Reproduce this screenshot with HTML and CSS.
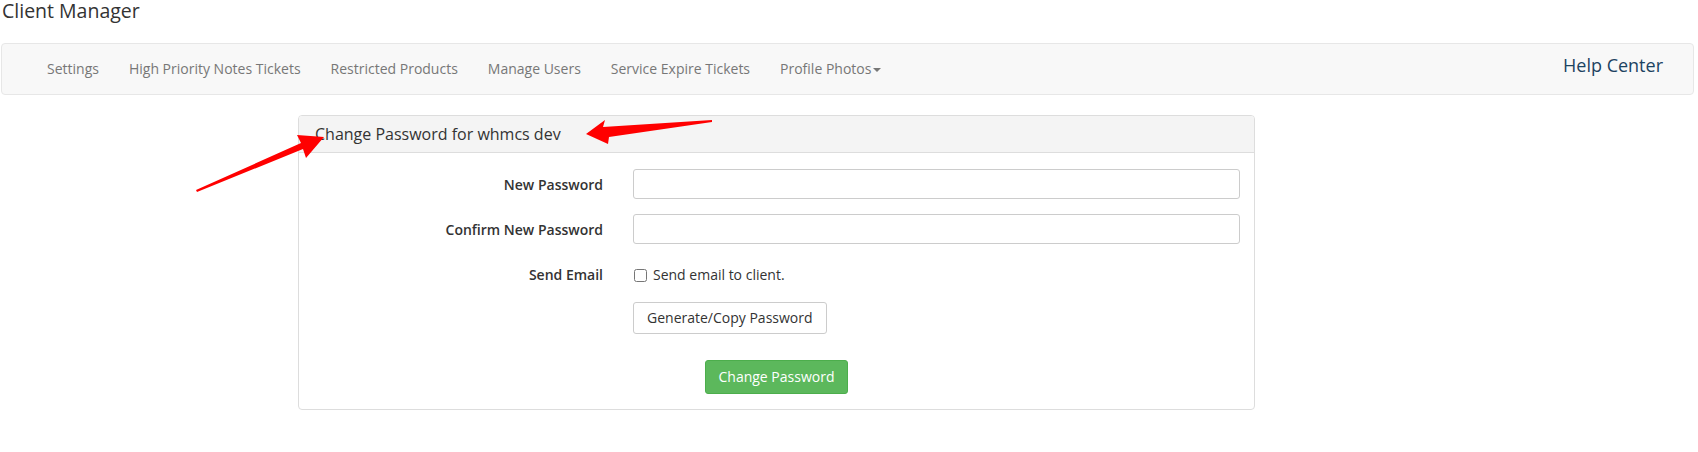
FILE: index.html
```html
<!DOCTYPE html>
<html>
<head>
	<meta charset="utf-8">
	<title>Client Manager</title>
	<link rel="stylesheet" href="styles.css">
</head>
<body>
	<div class="page">
		<h1 class="title">Client Manager</h1>
		<div class="navbar">
			<ul class="nav">
				<li>Settings</li>
				<li>High Priority Notes Tickets</li>
				<li>Restricted Products</li>
				<li>Manage Users</li>
				<li>Service Expire Tickets</li>
				<li>Profile Photos<span class="caret"></span></li>
			</ul>
			<div class="help">Help Center</div>
		</div>

		<div class="panel">
			<div class="panel-heading">Change Password for whmcs dev</div>
			<div class="panel-body">
				<div class="form">
					<label class="label">New Password</label>
					<input class="input" type="password">

					<label class="label">Confirm New Password</label>
					<input class="input" type="password">

					<label class="label row-check">Send Email</label>
					<label class="check row-check"><input type="checkbox">Send email to client.</label>

					<span></span>
					<div><button class="btn">Generate/Copy Password</button></div>
				</div>
				<div class="submit">
					<button class="btn btn-success">Change Password</button>
				</div>
			</div>
		</div>
	</div>

	<svg class="marks" width="1698" height="452" viewBox="0 0 1698 452">
		<path d="M196,190 L301,143 L297,135 L324,137 L306,158 L303,149 L197,192 Z" fill="#ff0000"/>
		<path d="M586,134 L605,120 L603,127 L712,120 L712,122 L609,137 L608,144 Z" fill="#ff0000"/>
	</svg>
</body>
</html>
```

FILE: styles.css
```css
*{
    margin: 0;
    padding: 0;
    box-sizing: border-box;
}
body{
    font-family: "Open Sans", "Liberation Sans", sans-serif;
    font-size: 14px;
    color: #333;
    background: #fff;
}
.page{
    padding: 0 4px 0 1px;
}
.title{
    font-size: 19.5px;
    font-weight: normal;
    line-height: 22px;
    padding-left: 1px;
    margin-bottom: 21px;
}
.navbar{
    height: 52px;
    background: #f8f8f8;
    border: 1px solid #e7e7e7;
    border-radius: 4px;
    display: flex;
    align-items: center;
    justify-content: space-between;
    padding: 0 30px 0 30px;
}
.nav{
    display: flex;
    list-style: none;
}
.nav li{
    color: #777;
    padding: 0 15px;
    line-height: 50px;
}
.caret{
    display: inline-block;
    width: 0;
    height: 0;
    margin-left: 2px;
    vertical-align: middle;
    border-top: 4px solid #777;
    border-left: 4px solid transparent;
    border-right: 4px solid transparent;
}
.help{
    font-size: 18px;
    color: #1c4361;
    padding-bottom: 8px;
}
.panel{
    margin: 20px 0 0 297px;
    width: 957px;
    border: 1px solid #ddd;
    border-radius: 4px;
}
.panel-heading{
    background: #f4f4f4;
    border-bottom: 1px solid #ddd;
    border-radius: 3px 3px 0 0;
    font-size: 16px;
    line-height: 20px;
    padding: 8px 16px;
}
.panel-body{
    padding: 16px 0 15px;
}
.form{
    display: grid;
    grid-template-columns: 304px 607px;
    column-gap: 30px;
    row-gap: 15px;
    align-items: center;
}
.label{
    text-align: right;
    font-size: 14px;
    font-weight: 600;
}
.input{
    height: 30px;
    border: 1px solid #ccc;
    border-radius: 3px;
    background: #fff;
}
.row-check{
    height: 32px;
    line-height: 32px;
}
.check{
    display: flex;
    align-items: center;
    font-size: 14px;
}
.check input{
    width: 13px;
    height: 13px;
    margin: 0 6px 0 1px;
}
.form > div{
    margin-top: -4px;
}
.btn{
    font-family: "Open Sans", "Liberation Sans", sans-serif;
    font-size: 14px;
    line-height: 20px;
    padding: 5px 13px;
    color: #333;
    background: #fff;
    border: 1px solid #ccc;
    border-radius: 3px;
}
.submit{
    text-align: center;
    margin-top: 26px;
}
.btn-success{
    color: #fff;
    background: #5cb85c;
    border-color: #4cae4c;
    padding: 6px 13px;
}
.marks{
    position: absolute;
    top: 0;
    left: 0;
    pointer-events: none;
}
```
